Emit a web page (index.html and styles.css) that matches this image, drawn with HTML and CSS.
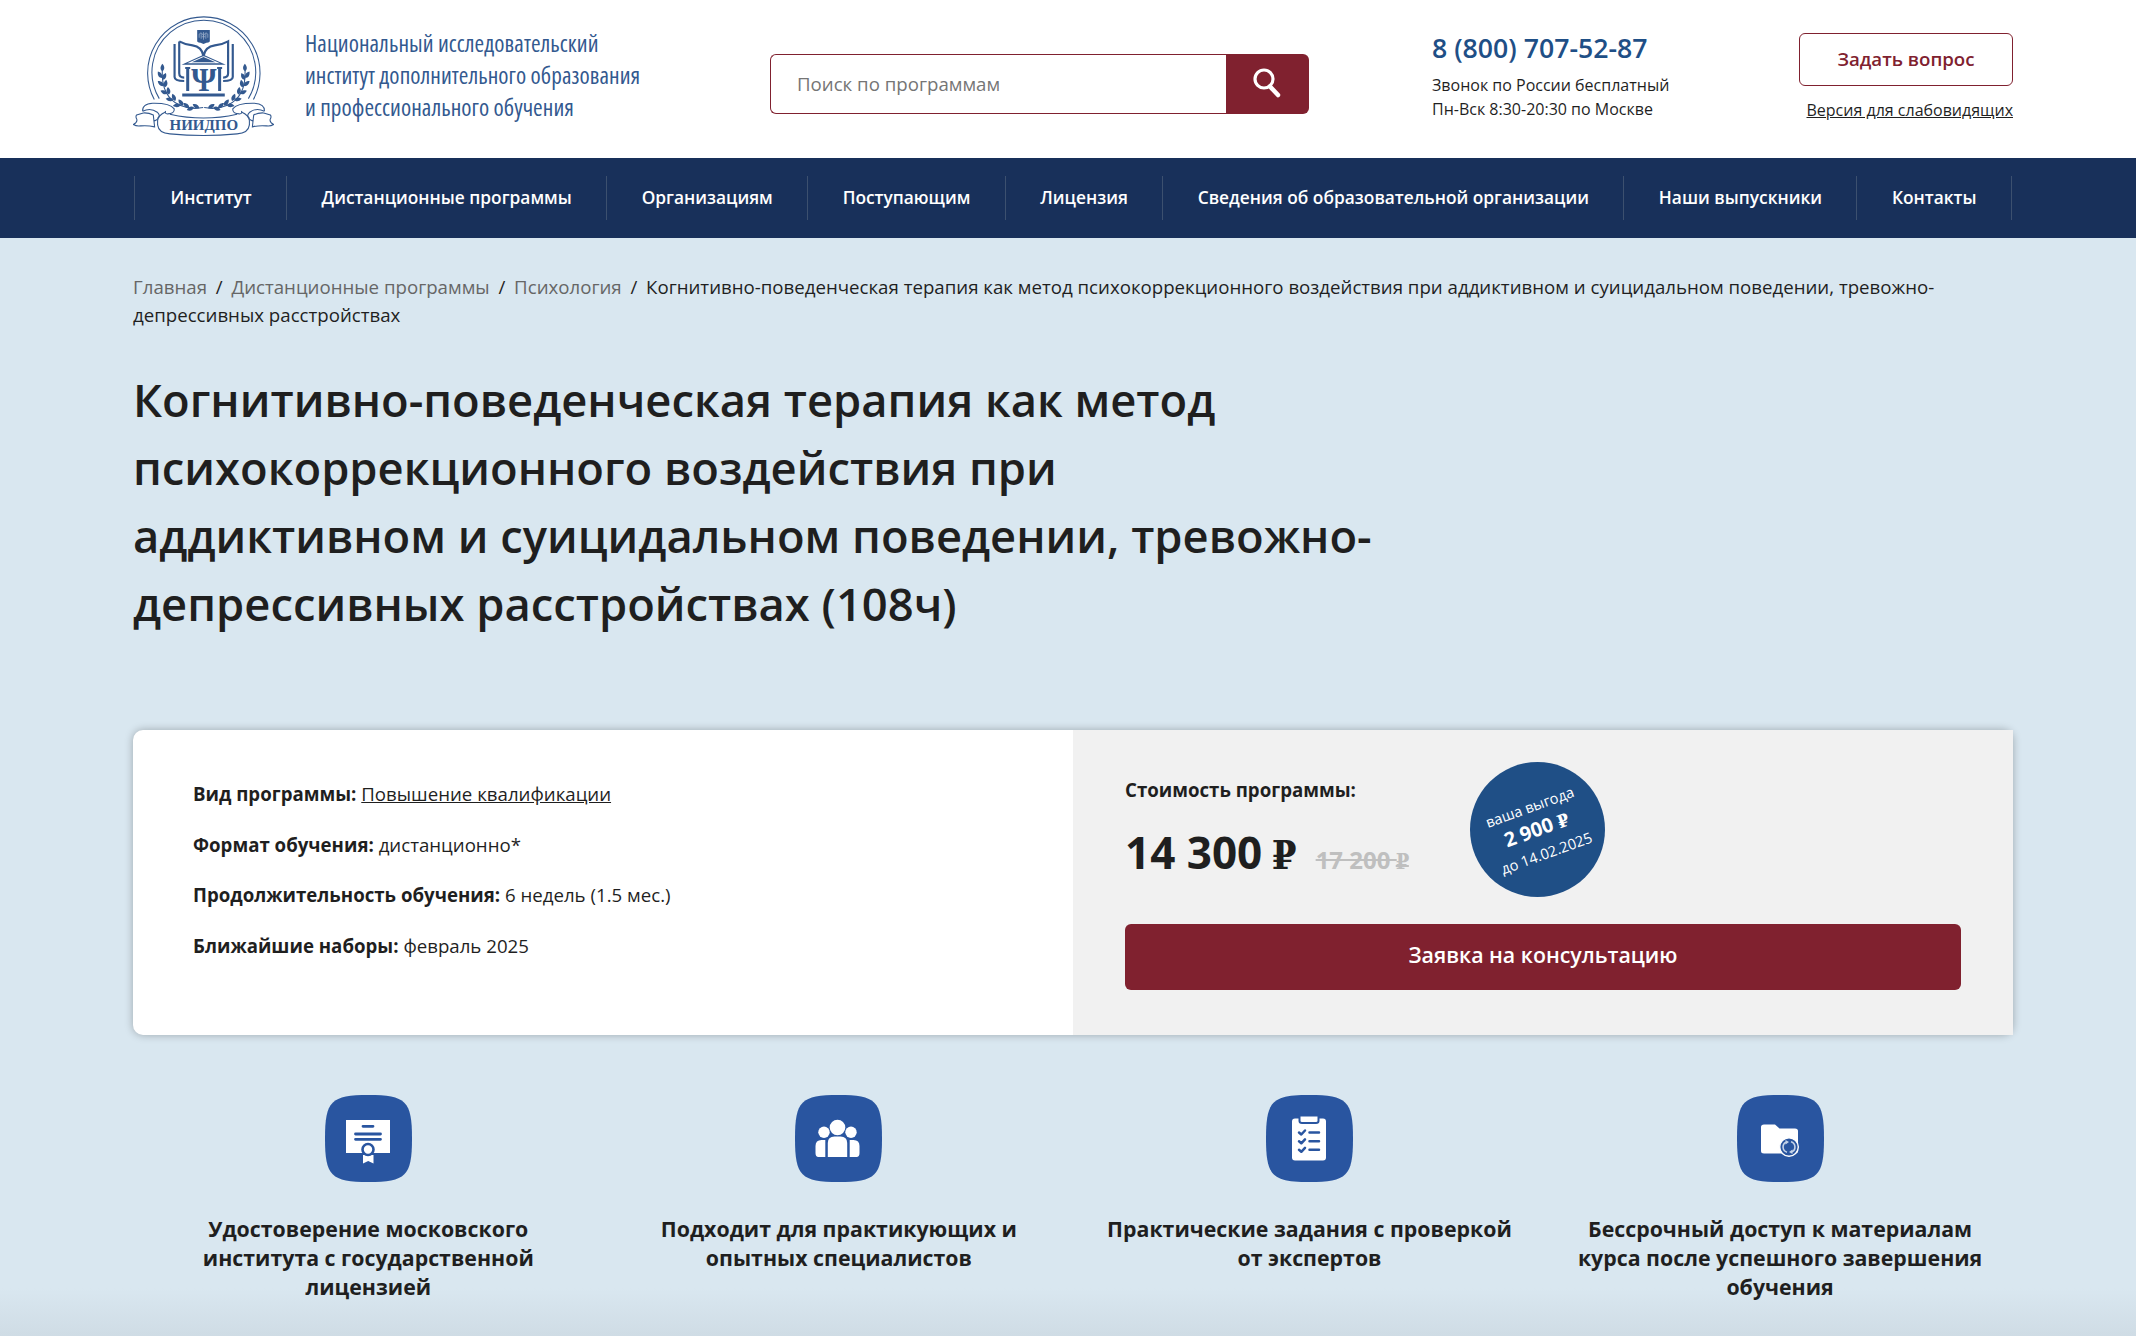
FILE: index.html
```html
<!DOCTYPE html>
<html lang="ru">
<head>
<meta charset="utf-8">
<title>НИИДПО — Когнитивно-поведенческая терапия</title>
<link rel="stylesheet" href="styles.css">
</head>
<body>
<header class="header">
  <a class="logo" href="#">
    <svg class="logo__mark" viewBox="39 30 424 384" aria-hidden="true">
      <defs>
        <path id="leaf" d="M0 0C-7 -5 -8 -14 0 -23C8 -14 7 -5 0 0Z"/>
        <g id="branch" class="fill">
          <path class="line" d="M127 212Q124 290 180 316Q212 330 250 323"/>
          <use href="#leaf" transform="translate(127 214) rotate(2)"/>
          <use href="#leaf" transform="translate(126 234) rotate(-32)"/>
          <use href="#leaf" transform="translate(128 240) rotate(26)"/>
          <use href="#leaf" transform="translate(131 258) rotate(-50)"/>
          <use href="#leaf" transform="translate(135 262) rotate(10)"/>
          <use href="#leaf" transform="translate(143 281) rotate(-68)"/>
          <use href="#leaf" transform="translate(147 284) rotate(-8)"/>
          <use href="#leaf" transform="translate(160 300) rotate(-82)"/>
          <use href="#leaf" transform="translate(166 303) rotate(-22)"/>
          <use href="#leaf" transform="translate(182 315) rotate(-96)"/>
          <use href="#leaf" transform="translate(190 317) rotate(-38)"/>
          <use href="#leaf" transform="translate(208 324) rotate(-50)"/>
          <use href="#leaf" transform="translate(222 322) rotate(-112)"/>
          <use href="#leaf" transform="translate(238 325) rotate(-58)"/>
        </g>
        <g id="scroll">
          <path class="line" d="M68 334Q66 312 98 310Q150 309 163 327Q164 342 143 342Q133 341 137 333M68 334Q92 322 112 337Q124 349 112 356"/>
          <path class="line" d="M70 339L50 345Q46 350 50 357Q54 366 40 374Q50 380 62 378Q84 376 104 381L100 345Q86 338 70 339M102 364L113 358"/>
        </g>
      </defs>
      <path class="line" d="M103 299A169 169 0 1 1 401 299M118 296A156 156 0 1 1 386 296"/>
      <path class="fill" d="M232 90H270V124Q266 128 260 128L251 132L242 128Q236 128 232 124Z"/>
      <path class="cut" d="M238 113V102L244 98L251 106L258 98L264 102V113M244 100V116M258 100V116M251 96V119M246 110H256"/>
      <path class="book" d="M164 132V231Q164 243 193 243M178 124V220Q178 233 193 233M178 124Q196 134 218 136Q246 140 251 168Q256 140 285 136Q307 134 325 124V220Q325 233 310 233M339 132V231Q339 243 310 243"/>
      <path class="fill" d="M185 194L251 164L318 194ZM202 190H301L251 168Z" fill-rule="evenodd"/>
      <path class="fill" d="M216 187L251 171L287 187ZM199 205H208V273H199ZM295 205H304V273H295ZM187 281H315V290H187Z"/>
      <path class="book" d="M196 204H211M292 204H307"/>
      <text class="psi" x="252" y="272" textLength="76" lengthAdjust="spacingAndGlyphs">Ψ</text>
      <use href="#branch"/>
      <use href="#branch" transform="translate(503 0) scale(-1 1)"/>
      <use href="#scroll"/>
      <use href="#scroll" transform="translate(502 0) scale(-1 1)"/>
      <path class="line" d="M137 336Q114 346 113 362V375Q116 400 150 402Q251 412 352 402Q386 400 389 375V362Q388 346 365 336M150 343Q251 366 352 343"/>
      <text class="abbr" x="252" y="390" textLength="206" lengthAdjust="spacingAndGlyphs">НИИДПО</text>
    </svg>
    <span class="logo__text">Национальный исследовательский<br>институт дополнительного образования<br>и профессионального обучения</span>
  </a>
  <form class="search">
    <input class="search__input" type="text" placeholder="Поиск по программам">
    <button class="search__button" type="button" aria-label="Найти">
      <svg width="28" height="32" viewBox="0 0 28 32"><circle cx="11" cy="12" r="9" fill="none" stroke="#fff" stroke-width="3.2"/><path d="M17 19.500L25 28" stroke="#fff" stroke-width="4.500" stroke-linecap="round"/></svg>
    </button>
  </form>
  <div class="contacts">
    <a class="contacts__phone" href="#">8 (800) 707-52-87</a>
    <span>Звонок по России бесплатный</span>
    <span>Пн-Вск 8:30-20:30 по Москве</span>
  </div>
  <div class="actions">
    <a class="actions__ask" href="#">Задать вопрос</a>
    <a class="actions__vision" href="#">Версия для слабовидящих</a>
  </div>
</header>
<nav class="nav">
  <a href="#">Институт</a>
  <a href="#">Дистанционные программы</a>
  <a href="#">Организациям</a>
  <a href="#">Поступающим</a>
  <a href="#">Лицензия</a>
  <a href="#">Сведения об образовательной организации</a>
  <a href="#">Наши выпускники</a>
  <a href="#">Контакты</a>
</nav>
<main class="page">
  <div class="crumbs"><a href="#">Главная</a><i>/</i><a href="#">Дистанционные программы</a><i>/</i><a href="#">Психология</a><i>/</i>Когнитивно-поведенческая терапия как метод психокоррекционного воздействия при аддиктивном и суицидальном поведении, тревожно-<br>депрессивных расстройствах</div>
  <h1 class="title">Когнитивно-поведенческая терапия как метод<br>психокоррекционного воздействия при<br>аддиктивном и суицидальном поведении, тревожно-<br>депрессивных расстройствах (108ч)</h1>
  <section class="card">
    <div class="card__info">
      <div><b>Вид программы:</b> <a href="#">Повышение квалификации</a></div>
      <div><b>Формат обучения:</b> дистанционно*</div>
      <div><b>Продолжительность обучения:</b> 6 недель (1.5 мес.)</div>
      <div><b>Ближайшие наборы:</b> февраль 2025</div>
    </div>
    <div class="card__price">
      <div class="cost">
        <div>
          <b class="cost__label">Стоимость программы:</b>
          <div class="cost__row"><span class="cost__new">14 300 <span class="rub">₽</span></span><s class="cost__old">17 200 <span class="rub">₽</span></s></div>
        </div>
        <div class="benefit"><div class="benefit__text">ваша выгода<b>2 900 <span class="rub">₽</span></b>до 14.02.2025</div></div>
      </div>
      <a class="apply" href="#">Заявка на консультацию</a>
    </div>
  </section>
  <section class="features">
    <div class="feature">
      <svg class="feature__icon" viewBox="0 0 87 87">
        <path class="tile" d="M0 43.500C0 6 6 0 43.500 0S87 6 87 43.500S81 87 43.500 87S0 81 0 43.500Z"/>
        <path fill="#fff" d="M21 25H65V58H21ZM38 60H48.500V68.500L43.200 66L38 68.500Z"/>
        <path class="mark" d="M38 31.300H48M30.500 39H55.500M30.500 44.300H55.500" stroke-width="2.800"/>
        <circle cx="43" cy="54.500" r="5.500" fill="#fff" stroke="#2955a0" stroke-width="2.600"/>
      </svg>
      <div>Удостоверение московского<br>института с государственной<br>лицензией</div>
    </div>
    <div class="feature">
      <svg class="feature__icon" viewBox="0 0 87 87">
        <path class="tile" d="M0 43.500C0 6 6 0 43.500 0S87 6 87 43.500S81 87 43.500 87S0 81 0 43.500Z"/>
        <g fill="#fff"><circle cx="42.500" cy="32.500" r="7.800"/><circle cx="29" cy="37.300" r="5.700"/><circle cx="56" cy="37.300" r="5.700"/>
        <path d="M32.800 62V48Q32.800 41.500 39.500 41.500H45.500Q52.200 41.500 52.200 48V62ZM30.300 62H23.500Q20.500 62 20.500 58V51Q20.500 45 26.500 45H30.300ZM54.700 62H61.500Q64.500 62 64.500 58V51Q64.500 45 58.500 45H54.700Z"/></g>
      </svg>
      <div>Подходит для практикующих и<br>опытных специалистов</div>
    </div>
    <div class="feature">
      <svg class="feature__icon" viewBox="0 0 87 87">
        <path class="tile" d="M0 43.500C0 6 6 0 43.500 0S87 6 87 43.500S81 87 43.500 87S0 81 0 43.500Z"/>
        <rect x="26" y="23.500" width="34" height="42" rx="3" fill="#fff"/>
        <path d="M33.500 20.500H52.500V26Q52.500 28 50 28H36Q33.500 28 33.500 26Z" fill="#fff" stroke="#2955a0" stroke-width="2"/>
        <path class="mark" d="M33 37.500L35.300 39.500L39 35.500M33 46.300L35.300 48.300L39 44.300M33 54.800L35.300 56.800L39 52.800M43.500 37.500H53M43.500 46.300H53M43.500 54.800H53" stroke-width="2.500"/>
      </svg>
      <div>Практические задания с проверкой<br>от экспертов</div>
    </div>
    <div class="feature">
      <svg class="feature__icon" viewBox="0 0 87 87">
        <path class="tile" d="M0 43.500C0 6 6 0 43.500 0S87 6 87 43.500S81 87 43.500 87S0 81 0 43.500Z"/>
        <path fill="#fff" d="M24 32Q24 29.500 27 29.500H38L42.500 33.500H58Q61 33.500 61 36V56Q61 58.500 58 58.500H27Q24 58.500 24 56Z"/>
        <circle cx="52" cy="52" r="9.300" fill="#2955a0" stroke="#fff" stroke-width="1.400"/>
        <path d="M50 57.200A5.400 5.400 0 0 1 49 47.200M54 46.800A5.400 5.400 0 0 1 55 56.800" fill="none" stroke="#c5d3e8" stroke-width="1.600"/>
        <path fill="#c5d3e8" d="M48.500 45L52 47L48.500 49.500ZM55.500 59L52 57L55.500 54.500Z"/>
      </svg>
      <div>Бессрочный доступ к материалам<br>курса после успешного завершения<br>обучения</div>
    </div>
  </section>
</main>
</body>
</html>
```
FILE: styles.css
```css
* { box-sizing: border-box; }
body {
  margin: 0;
  background: #d9e7f0;
  color: #1f1f1f;
  font: 18.67px/28px "Open Sans", "Noto Sans", sans-serif;
}
a { color: inherit; text-decoration: none; }

.header {
  display: flex;
  align-items: flex-start;
  height: 158px;
  padding: 0 123px 0 133px;
  background: #fff;
}
.logo { display: flex; width: 637px; color: #33598f; }
.logo__mark { width: 141px; height: 128px; margin: 10px 31px 0 0; }
.logo__text {
  padding-top: 27px;
  font-size: 23.2px;
  line-height: 32px;
  letter-spacing: .06px;
  font-stretch: 75%;
  font-weight: 500;
  white-space: nowrap;
}
.line { fill: none; stroke: #33598f; stroke-width: 3.2; }
.fill { fill: #33598f; }
.book { fill: none; stroke: #33598f; stroke-width: 6.5; }
.cut { fill: none; stroke: #b5c4da; stroke-width: 1.8; }
.psi, .abbr { font-family: "Liberation Serif", serif; font-weight: 700; text-anchor: middle; fill: #33598f; }
.psi { font-size: 104px; }
.abbr { font-size: 46px; }

.search { display: flex; width: 539px; height: 60px; margin-top: 54px; }
.search__input {
  width: 456px;
  padding: 0 26px;
  border: 1px solid #80212f;
  border-right: 0;
  border-radius: 6px 0 0 6px;
  font: inherit;
}
.search__input::placeholder { color: #757575; opacity: 1; }
.search__button {
  display: flex;
  align-items: center;
  justify-content: center;
  width: 83px;
  padding: 0 1px 2px 0;
  border: 0;
  border-radius: 0 6px 6px 0;
  background: #80212f;
}

.contacts {
  display: flex;
  flex-direction: column;
  width: 367px;
  margin-left: 123px;
  padding-top: 32px;
  font-size: 16px;
  line-height: 24px;
}
.contacts__phone { margin-bottom: 9px; font-size: 26.67px; line-height: 32px; font-weight: 600; color: #1f4f86; }

.actions {
  display: flex;
  flex-direction: column;
  align-items: flex-end;
  width: 214px;
  padding-top: 33px;
  font-size: 16px;
  line-height: 24px;
}
.actions__ask {
  width: 214px;
  height: 53px;
  margin-bottom: 12px;
  border: 1px solid #80212f;
  border-radius: 6px;
  color: #80212f;
  font-size: 18.67px;
  font-weight: 600;
  line-height: 50px;
  text-align: center;
}
.actions__vision { text-decoration: underline; }

.nav {
  display: flex;
  align-items: center;
  height: 80px;
  padding-left: 134px;
  background: #18305a;
  color: #fff;
  font-size: 17.33px;
  font-weight: 600;
  line-height: 42px;
  white-space: nowrap;
}
.nav a { padding: 0 34.45px 2px; border-right: 1px solid #3c506f; }
.nav a:first-child { padding-left: 35.5px; border-left: 1px solid #3c506f; }

.page {
  height: 1098px;
  padding: 35px 123px 0 133px;
  background: linear-gradient(#d9e7f0 1050px, #cfdce5 1098px);
}
.crumbs { height: 56px; white-space: nowrap; }
.crumbs a { color: #666; }
.crumbs i { margin: 0 8.8px; font-style: normal; }
.title {
  height: 272px;
  margin: 37px 0 92px;
  font-size: 45.33px;
  font-weight: 600;
  line-height: 68px;
}

.card {
  display: flex;
  width: 1880px;
  height: 305px;
  border-radius: 10px;
  background: #fff;
  box-shadow: 0 0 8px rgba(0, 0, 0, .28);
}
.card__info {
  display: flex;
  flex-direction: column;
  gap: 22.6px;
  width: 940px;
  padding: 50px 60px;
}
.card__info a { text-decoration: underline; }
.card__price { width: 940px; padding: 32px 52px; background: #f1f1f1; }
.cost { display: flex; height: 162px; }
.cost > div:first-child { width: 345px; padding-top: 14px; }
.cost__label { display: block; }
.cost__row { display: flex; align-items: baseline; gap: 20px; padding-top: 18px; line-height: 60px; font-weight: 700; white-space: nowrap; }
.cost__new { font-size: 44px; }
.cost__old { font-size: 24px; color: #bfbfbf; }
.rub { font-family: "DejaVu Serif Condensed", "DejaVu Serif", serif; font-size: .9em; font-stretch: condensed; letter-spacing: -.02em; }
.cost__new .rub { margin-left: -2px; }
.cost__old .rub { margin-left: -1px; }

.benefit {
  display: flex;
  align-items: center;
  justify-content: center;
  width: 135px;
  height: 135px;
  border-radius: 50%;
  background: #1f4f86;
  color: #fff;
}
.benefit__text { font-size: 14.67px; line-height: 24px; text-align: center; transform: rotate(-20deg); white-space: nowrap; }
.benefit__text b { display: block; margin-left: -3px; font-size: 20px; }

.apply {
  display: block;
  height: 66px;
  border-radius: 6px;
  background: #80212f;
  color: #fff;
  font-size: 21.33px;
  font-weight: 600;
  line-height: 62px;
  text-align: center;
}

.features {
  display: grid;
  grid-template-columns: repeat(4, 470.6px);
  padding-top: 60px;
  font-size: 21.33px;
  font-weight: 700;
  line-height: 29px;
  text-align: center;
}
.feature { white-space: nowrap; }
.feature__icon { display: block; width: 87px; height: 87px; margin: 0 auto 32px; }
.tile { fill: #2955a0; }
.mark { fill: none; stroke: #2955a0; stroke-linecap: round; stroke-linejoin: round; }
```
